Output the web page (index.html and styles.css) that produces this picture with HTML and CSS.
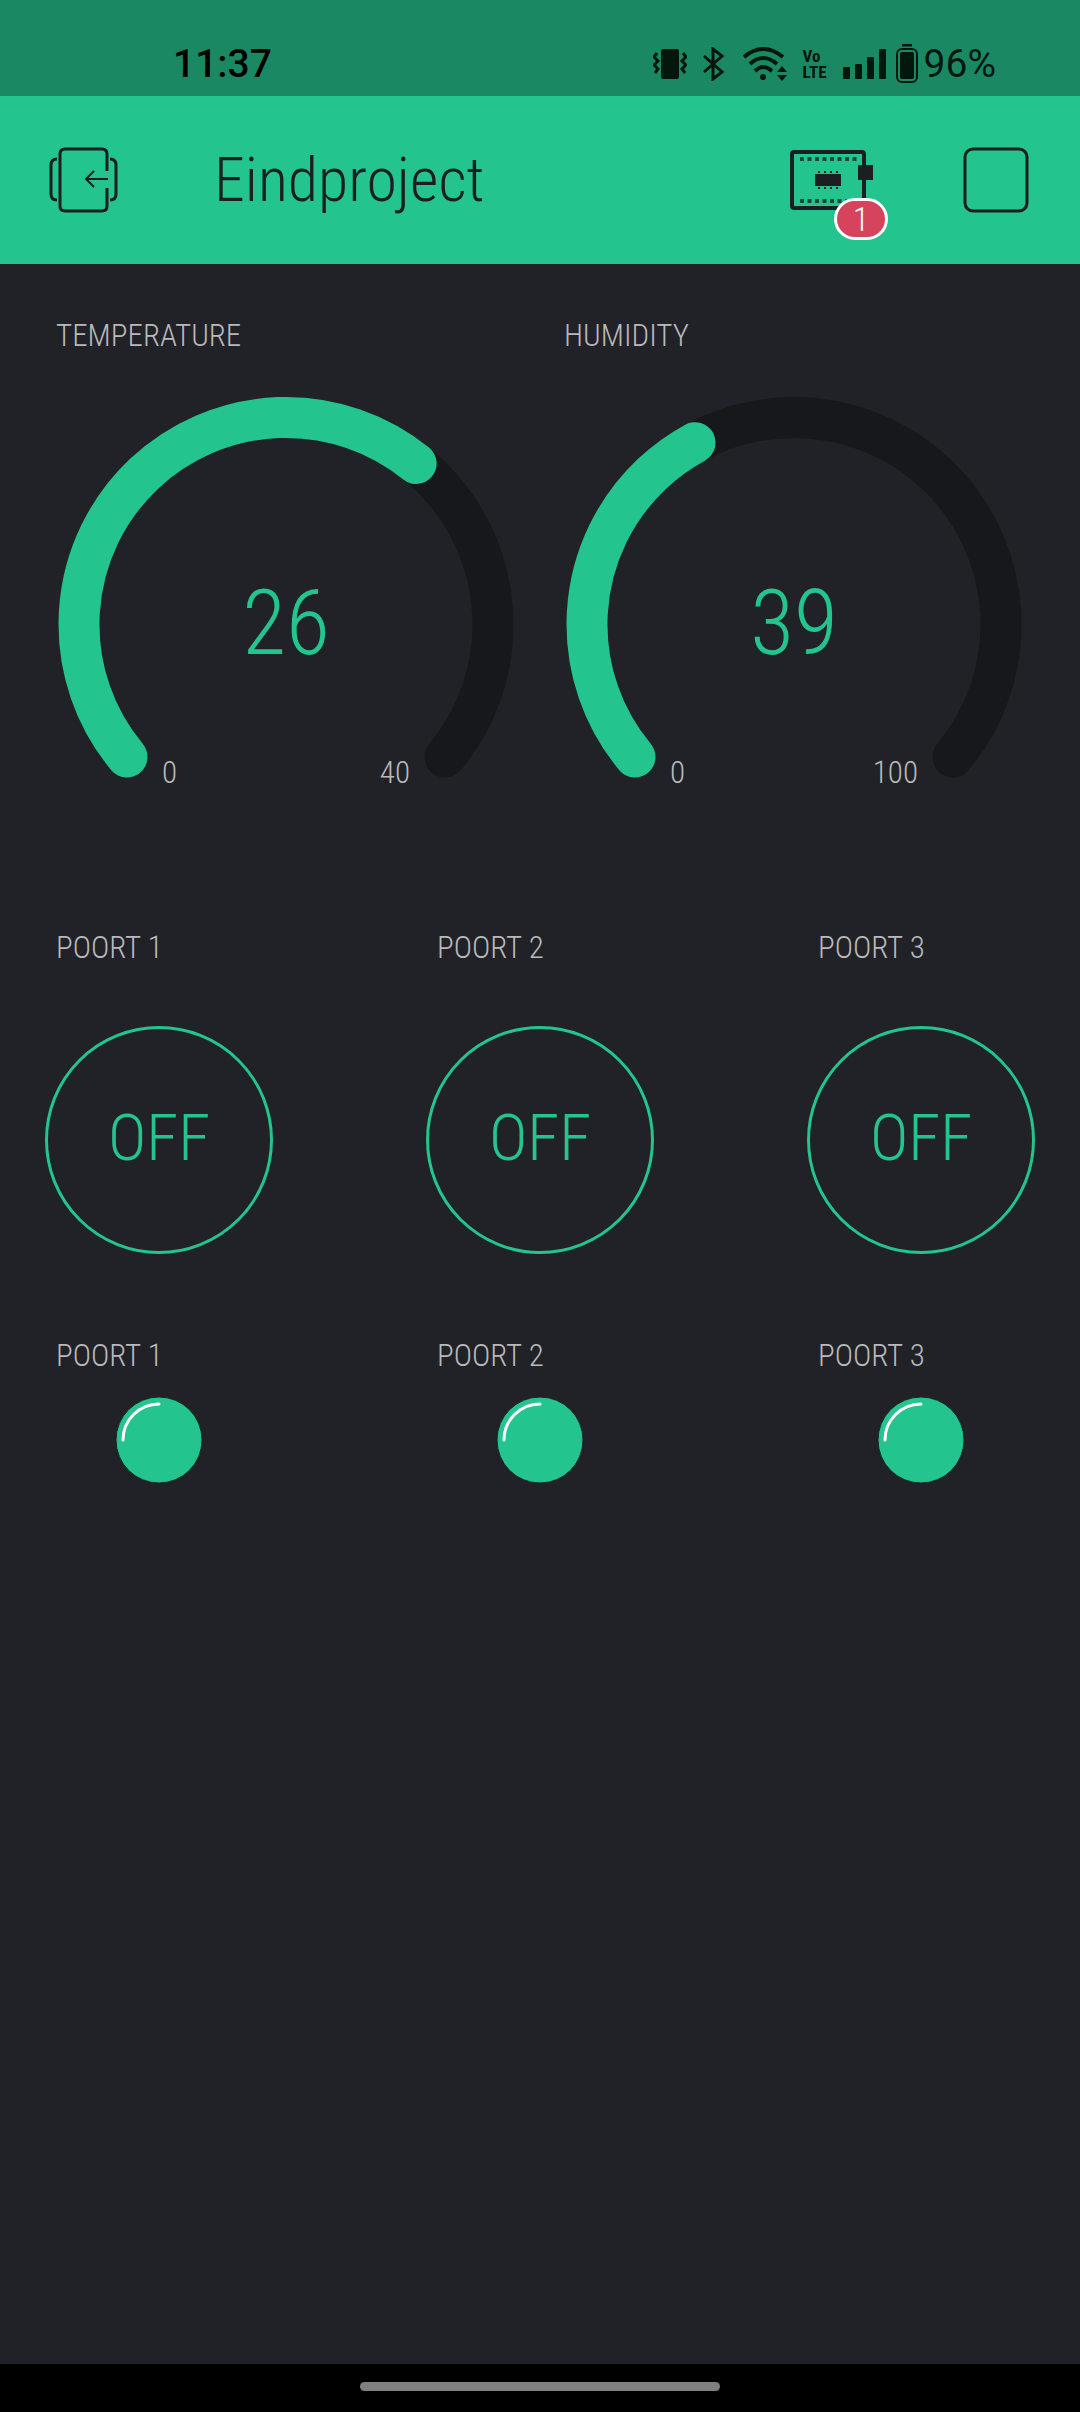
FILE: index.html
```html
<!DOCTYPE html>
<html lang="nl">
<head>
<meta charset="utf-8">
<meta name="viewport" content="width=device-width, initial-scale=1">
<title>Eindproject</title>
<link rel="stylesheet" href="styles.css">
</head>
<body>
<div class="status">
  <span class="clock">11:37</span>
  <div class="status-icons">
    <svg width="34" height="30" viewBox="0 0 34 30" aria-hidden="true"><rect x="8" y="0" width="18" height="30" rx="2" fill="currentColor"/><path d="M4 4L1 8l4 4-4 4 4 4-3 4M30 4l3 4-4 4 4 4-4 4 3 4" fill="none" stroke="currentColor" stroke-width="3"/></svg>
    <svg class="bluetooth" width="22" height="34" viewBox="0 0 22 34" aria-hidden="true"><path d="M1 9l18 16-9 7V2l9 7L1 25" fill="none" stroke="currentColor" stroke-width="3"/></svg>
    <svg class="wifi" width="44" height="34" viewBox="0 0 44 34" aria-hidden="true"><g fill="none" stroke="currentColor" stroke-width="4"><path d="M1 10Q20-6 40 10"/><path d="M7 17Q20 5 34 17"/><path d="M12 24Q20 16 29 24"/></g><circle cx="20" cy="30" r="3" fill="currentColor"/><path d="M34 25l5-6 5 6zM34 28h10l-5 6z" fill="currentColor"/></svg>
    <span class="volte"><span>Vo</span><span>LTE</span></span>
    <svg class="signal" width="43" height="30" viewBox="0 0 43 30" aria-hidden="true"><g fill="currentColor"><rect x="0" y="18" width="7" height="12" rx="1"/><rect x="12" y="15" width="7" height="15" rx="1"/><rect x="24" y="8" width="7" height="22" rx="1"/><rect x="36" y="0" width="7" height="30" rx="1"/></g></svg>
    <svg class="battery" width="22" height="40" viewBox="0 0 22 40" aria-hidden="true"><path d="M6 1h10" stroke="currentColor" stroke-width="3"/><rect x="1" y="5" width="20" height="33" rx="5" fill="none" stroke="currentColor" stroke-width="2"/><rect x="4" y="8" width="14" height="27" rx="2" fill="currentColor"/></svg>
    <span class="percent">96%</span>
  </div>
</div>

<header class="header">
  <button class="icon-button" type="button" aria-label="Exit">
    <svg width="72" height="66" viewBox="0 0 72 66"><g fill="none" stroke="currentColor" stroke-width="3"><path d="M60 24V7q0-5-5-5H18q-5 0-5 5v52q0 5 5 5h37q5 0 5-5V41"/><path d="M10 12q-6 0-6 6v29q0 6 6 6M63 12q6 0 6 6v29q0 6-6 6"/><path d="M61 32H39M47 24l-8 8 8 8" stroke-width="2"/></g></svg>
  </button>
  <h1 class="title">Eindproject</h1>
  <button class="icon-button devices" type="button" aria-label="Devices">
    <svg width="84" height="60" viewBox="0 0 84 60"><rect x="2" y="2" width="72" height="56" rx="2" fill="none" stroke="currentColor" stroke-width="4"/><path d="M10 9h60M10 51h60" stroke="currentColor" stroke-width="4" stroke-dasharray="4 3.5" opacity=".75"/><path d="M28 22h21M28 38h21" stroke="currentColor" stroke-width="2" stroke-dasharray="2 4"/><path d="M25 24h26v12H25zM68 15h15v15H68z" fill="currentColor"/></svg>
    <span class="badge">1</span>
  </button>
  <button class="icon-button" type="button" aria-label="Stop">
    <svg width="66" height="66" viewBox="0 0 66 66"><rect x="2" y="2" width="62" height="62" rx="8" fill="none" stroke="currentColor" stroke-width="3"/></svg>
  </button>
</header>

<main class="board">
  <div class="row gauges">
    <section class="gauge">
      <h2 class="label">TEMPERATURE</h2>
      <svg class="dial" viewBox="0 0 508 460" role="meter" aria-label="Temperature" aria-valuemin="0" aria-valuemax="40" aria-valuenow="26">
        <path class="track" d="M95 403A207 207 0 1 1 413 403"/>
        <path class="fill" pathLength="100" stroke-dasharray="65 200" d="M95 403A207 207 0 1 1 413 403"/>
        <text class="value" x="254" y="300">26</text>
        <text class="limit" x="130" y="429">0</text>
        <text class="limit max" x="378" y="429">40</text>
      </svg>
    </section>
    <section class="gauge">
      <h2 class="label">HUMIDITY</h2>
      <svg class="dial" viewBox="0 0 508 460" role="meter" aria-label="Humidity" aria-valuemin="0" aria-valuemax="100" aria-valuenow="39">
        <path class="track" d="M95 403A207 207 0 1 1 413 403"/>
        <path class="fill" pathLength="100" stroke-dasharray="39 200" d="M95 403A207 207 0 1 1 413 403"/>
        <text class="value" x="254" y="300">39</text>
        <text class="limit" x="130" y="429">0</text>
        <text class="limit max" x="378" y="429">100</text>
      </svg>
    </section>
  </div>

  <div class="row switches">
    <section class="port"><h2 class="label" id="p1">POORT 1</h2><button class="switch" type="button" aria-describedby="p1">OFF</button></section>
    <section class="port"><h2 class="label" id="p2">POORT 2</h2><button class="switch" type="button" aria-describedby="p2">OFF</button></section>
    <section class="port"><h2 class="label" id="p3">POORT 3</h2><button class="switch" type="button" aria-describedby="p3">OFF</button></section>
  </div>

  <div class="row leds">
    <section class="port"><h2 class="label">POORT 1</h2><svg class="led" viewBox="0 0 88 88" aria-hidden="true"><circle cx="44" cy="44" r="43"/><path d="M8 44A36 36 0 0 1 44 8"/></svg></section>
    <section class="port"><h2 class="label">POORT 2</h2><svg class="led" viewBox="0 0 88 88" aria-hidden="true"><circle cx="44" cy="44" r="43"/><path d="M8 44A36 36 0 0 1 44 8"/></svg></section>
    <section class="port"><h2 class="label">POORT 3</h2><svg class="led" viewBox="0 0 88 88" aria-hidden="true"><circle cx="44" cy="44" r="43"/><path d="M8 44A36 36 0 0 1 44 8"/></svg></section>
  </div>
</main>

<footer class="nav"><span class="handle"></span></footer>
</body>
</html>
```
FILE: styles.css
```css
* {
  box-sizing: border-box;
}

:root {
  --green: #24c48e;
  --dark: #1c1e22;
}

body {
  margin: 0;
  min-height: 100vh;
  display: flex;
  flex-direction: column;
  background: #212227;
  font-family: "Roboto Condensed", Roboto, sans-serif;
  font-weight: 300;
}

svg {
  display: block;
  flex: none;
}

h1,
h2 {
  margin: 0;
  font-weight: 300;
}

/* System status bar */
.status {
  height: 96px;
  padding: 32px 84px 0 173px;
  display: flex;
  justify-content: space-between;
  align-items: center;
  background: #1a8963;
  font-family: Roboto, sans-serif;
  color: #03170f;
}

.clock {
  font-size: 39px;
  font-weight: 500;
  color: #000;
}

.status-icons {
  display: flex;
  align-items: center;
}

.bluetooth {
  margin-left: 16px;
}

.wifi {
  margin-left: 18px;
}

.volte {
  width: 24px;
  margin-left: 16px;
  display: flex;
  flex-direction: column;
  font-family: "Roboto Condensed", "Liberation Sans Narrow", Roboto, sans-serif;
  font-size: 17px;
  font-weight: 700;
  line-height: 16px;
}

.signal {
  margin-left: 16px;
}

.battery {
  margin-left: 10px;
}

.percent {
  margin-left: 6px;
  font-size: 39px;
  font-weight: 400;
}

/* Project header */
.header {
  height: 168px;
  padding: 0 51px 0 47px;
  display: flex;
  align-items: center;
  background: var(--green);
  color: var(--dark);
}

.icon-button {
  padding: 0;
  border: 0;
  background: none;
  color: inherit;
  font: inherit;
}

.title {
  flex: 1;
  margin-left: 95px;
  font-size: 62px;
  line-height: 72px;
}

.devices {
  position: relative;
  margin-right: 89px;
}

.badge {
  position: absolute;
  left: 44px;
  top: 48px;
  width: 54px;
  height: 42px;
  border: 3px solid #fff;
  border-radius: 21px;
  background: #d5435d;
  color: #fff;
  font-size: 34px;
  line-height: 36px;
}

/* Widget board */
.board {
  flex: 1;
  padding: 54px 32px 0;
}

.row {
  display: flex;
  justify-content: space-between;
}

.gauge {
  width: 50%;
}

.port {
  width: 25%;
  display: flex;
  flex-direction: column;
  align-items: center;
}

.label {
  align-self: stretch;
  padding-left: 24px;
  font-size: 31px;
  line-height: 36px;
  color: #b9b9bb;
}

.dial {
  width: 100%;
}

.track,
.fill {
  fill: none;
  stroke: #17181b;
  stroke-width: 41px;
  stroke-linecap: round;
}

.fill {
  stroke: var(--green);
}

.value {
  fill: var(--green);
  font-size: 90px;
  text-anchor: middle;
}

.limit {
  fill: #b9b9bb;
  font-size: 31px;
}

.max {
  text-anchor: end;
}

.switches {
  margin-top: 116px;
}

.switch {
  width: 228px;
  height: 228px;
  margin-top: 60px;
  padding: 0 0 4px;
  border: 3px solid var(--green);
  border-radius: 50%;
  background: none;
  color: var(--green);
  font: inherit;
  font-size: 65px;
}

.leds {
  margin-top: 84px;
}

.led {
  width: 88px;
  margin-top: 22px;
}

.led circle {
  fill: var(--green);
  stroke: #122b25;
  stroke-width: 1px;
}

.led path {
  fill: none;
  stroke: #fff;
  stroke-width: 3px;
  stroke-linecap: round;
}

/* System gesture bar */
.nav {
  height: 48px;
  padding-top: 18px;
  background: #000;
}

.handle {
  display: block;
  width: 33.33%;
  height: 9px;
  margin: 0 auto;
  border-radius: 5px;
  background: #808080;
}
```
